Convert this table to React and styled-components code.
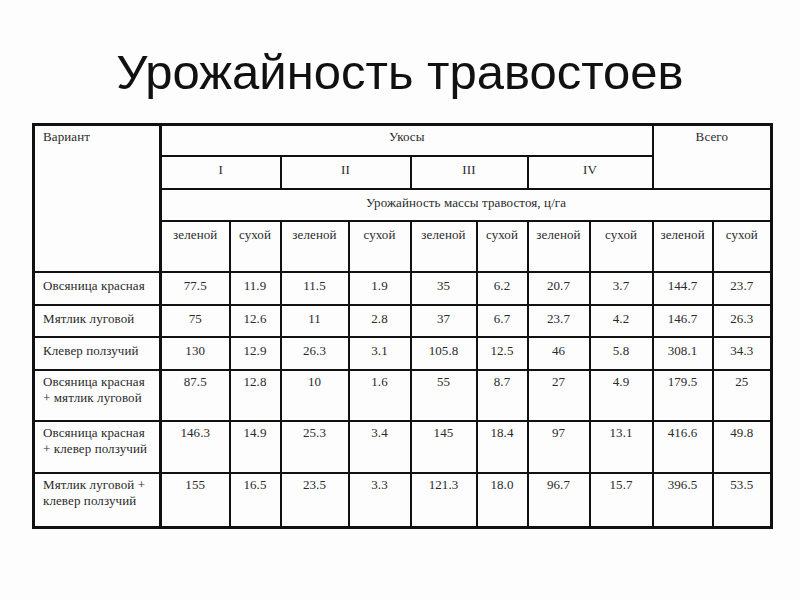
import React from "react";
import styled, { createGlobalStyle } from "styled-components";

const Global = createGlobalStyle`
  html, body { margin: 0; padding: 0; background: #fff; }
  #root { width: 800px; height: 600px; }
`;

const Page = styled.div`
  width: 800px;
  height: 600px;
  background: #fdfdfd;
  display: flex;
  flex-direction: column;
  align-items: flex-start;
`;

const Title = styled.h1`
  margin: 0;
  width: 800px;
  padding-top: 46px;
  height: 122px;
  box-sizing: border-box;
  text-align: center;
  font-family: "Liberation Sans", Arial, sans-serif;
  font-weight: 400;
  font-size: 49px;
  line-height: 52px;
  color: #111;
`;

const TableWrap = styled.div`
  padding-left: 32px;
  padding-top: 1px;
`;

const Table = styled.table`
  border-collapse: collapse;
  table-layout: fixed;
  width: 738px;
  border: 3px solid #111;
  font-family: "Liberation Serif", "Times New Roman", serif;
  font-size: 13px;
  color: #2a2a2a;
  letter-spacing: 0.1px;
`;

const Cell = styled.td`
  border: 2px solid #111;
  border-right-width: ${(p) => (p.$thick ? 3 : 2)}px;
  padding: ${(p) => p.$pt ?? 5}px 4px 0 ${(p) => (p.$left ? 8 : 4)}px;
  vertical-align: top;
  text-align: ${(p) => (p.$left ? "left" : "center")};
  line-height: 16px;
  height: ${(p) => p.$h}px;
  box-sizing: border-box;
  overflow: hidden;
  white-space: nowrap;
`;

const Line = styled.div`
  display: block;
`;

const widths = [127, 69, 51, 68, 62, 66, 51, 62, 63, 60, 59];

const rows = [
  { name: ["Овсяница красная"], h: 33, v: ["77.5", "11.9", "11.5", "1.9", "35", "6.2", "20.7", "3.7", "144.7", "23.7"] },
  { name: ["Мятлик луговой"], h: 32, v: ["75", "12.6", "11", "2.8", "37", "6.7", "23.7", "4.2", "146.7", "26.3"] },
  { name: ["Клевер ползучий"], h: 33, v: ["130", "12.9", "26.3", "3.1", "105.8", "12.5", "46", "5.8", "308.1", "34.3"] },
  { name: ["Овсяница красная", "+ мятлик луговой"], h: 51, v: ["87.5", "12.8", "10", "1.6", "55", "8.7", "27", "4.9", "179.5", "25"] },
  { name: ["Овсяница красная", "+ клевер ползучий"], h: 52, v: ["146.3", "14.9", "25.3", "3.4", "145", "18.4", "97", "13.1", "416.6", "49.8"] },
  { name: ["Мятлик луговой +", "клевер ползучий"], h: 55, v: ["155", "16.5", "23.5", "3.3", "121.3", "18.0", "96.7", "15.7", "396.5", "53.5"] },
];

export default function App() {
  return (
    <Page>
      <Global />
      <Title>Урожайность травостоев</Title>
      <TableWrap>
        <Table>
          <colgroup>
            {widths.map((w, i) => (
              <col key={i} style={{ width: w }} />
            ))}
          </colgroup>
          <tbody>
            <tr>
              <Cell rowSpan={4} $left $thick $h={31} $pt={3}>Вариант</Cell>
              <Cell colSpan={8} $h={31} $pt={3}>Укосы</Cell>
              <Cell colSpan={2} rowSpan={2} $h={64} $pt={3}>Всего</Cell>
            </tr>
            <tr>
              <Cell colSpan={2} $h={33}>I</Cell>
              <Cell colSpan={2} $h={33}>II</Cell>
              <Cell colSpan={2} $h={33}>III</Cell>
              <Cell colSpan={2} $h={33}>IV</Cell>
            </tr>
            <tr>
              <Cell colSpan={10} $h={32}>Урожайность массы травостоя, ц/га</Cell>
            </tr>
            <tr>
              {Array.from({ length: 5 }).map((_, i) => (
                <React.Fragment key={i}>
                  <Cell $h={51}>зеленой</Cell>
                  <Cell $h={51}>сухой</Cell>
                </React.Fragment>
              ))}
            </tr>
            {rows.map((r, i) => (
              <tr key={i}>
                <Cell $left $thick $h={r.h} $pt={r.name.length > 1 ? 3 : 5}>
                  {r.name.map((n, j) => (
                    <Line key={j}>{n}</Line>
                  ))}
                </Cell>
                {r.v.map((v, j) => (
                  <Cell key={j} $h={r.h} $pt={r.name.length > 1 ? 3 : 5}>{v}</Cell>
                ))}
              </tr>
            ))}
          </tbody>
        </Table>
      </TableWrap>
    </Page>
  );
}
